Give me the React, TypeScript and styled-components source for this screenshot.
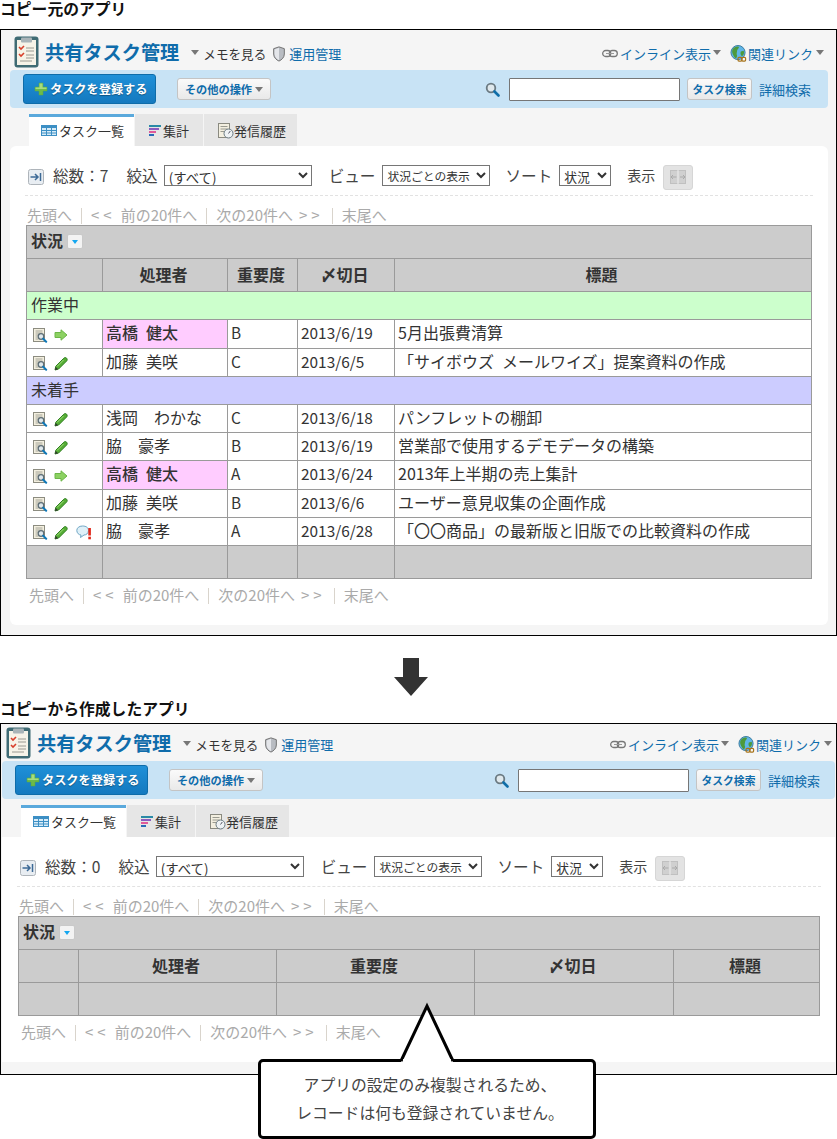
import React from "react";
import styled, { createGlobalStyle } from "styled-components";

const Global = createGlobalStyle`
  html, body { margin: 0; padding: 0; background: #fff; }
  body { font-family: "Noto Sans CJK JP", "Liberation Sans", sans-serif; color: #333; }
  * { box-sizing: border-box; }
`;

const Page = styled.div`
  position: relative;
  width: 837px;
  height: 1139px;
  overflow: hidden;
`;
const Caption = styled.div<{ $h: number }>`
  height: ${(p) => p.$h}px;
  font-size: 15.8px;
  font-weight: 700;
  line-height: 17px;
  color: #111;
`;
const ArrowRow = styled.div`
  height: 64px;
  padding: 22px 0 0 394px;
  display: flex;
  align-items: flex-start;
`;
const Frame = styled.div<{ $pl: number; $pr: number; $h: number }>`
  width: 837px;
  height: ${(p) => p.$h}px;
  border: 1px solid #000;
  background: #f5f5f5;
  padding: 0 ${(p) => p.$pr}px 0 ${(p) => p.$pl}px;
`;
const Header = styled.div<{ $h: number; $pl: number; $pr: number }>`
  height: ${(p) => p.$h}px;
  display: flex;
  align-items: flex-end;
  justify-content: space-between;
  padding: 0 ${(p) => p.$pr}px 0 ${(p) => p.$pl}px;
`;
const HeaderSide = styled.div`
  height: 36px;
  display: flex;
  align-items: center;
  font-size: 13px;
  & > svg {
    margin-top: 3px;
  }
`;
const Logo = styled.svg`
  && {
    flex: none;
    margin: 0 6px 0 0;
  }
`;
const Title = styled.div`
  font-size: 19.2px;
  font-weight: 700;
  color: #0f6cab;
  line-height: 24px;
  margin-right: 12px;
`;
const Plain = styled.span`
  color: #333;
  font-size: 12.6px;
  margin-top: 2px;
`;
const Link = styled.span`
  color: #0f6cab;
  margin-top: 2px;
`;
const Tri = styled.span<{ $l?: number; $r?: number }>`
  display: inline-block;
  width: 0;
  height: 0;
  border-style: solid;
  border-width: 5px 4.5px 0 4.5px;
  border-color: #777 transparent transparent transparent;
  margin: 1px ${(p) => p.$r ?? 0}px 0 ${(p) => p.$l ?? 0}px;
`;
const Spacer = styled.span<{ $w: number }>`
  display: inline-block;
  flex: none;
  width: ${(p) => p.$w}px;
`;
const Bar = styled.div<{ $pr: number }>`
  height: 38px;
  background: #c8e3f5;
  border-radius: 4px;
  display: flex;
  align-items: center;
  justify-content: space-between;
  padding: 0 ${(p) => p.$pr}px 0 13px;
`;
const BarSide = styled.div`
  display: flex;
  align-items: center;
`;
const PrimaryButton = styled.div`
  width: 133px;
  height: 30px;
  border: 1px solid #0e6ca9;
  border-radius: 3px;
  background: linear-gradient(#1f90d8, #1479bf);
  color: #fff;
  font-size: 12.2px;
  font-weight: 700;
  display: flex;
  align-items: center;
  padding-left: 10px;
  gap: 2px;
  text-shadow: 0 1px 1px rgba(0, 0, 0, 0.35);
  white-space: nowrap;
`;
const GreyButton = styled.div<{ $w: number; $fs: number; $ml: number }>`
  width: ${(p) => p.$w}px;
  height: 22px;
  margin-left: ${(p) => p.$ml}px;
  border: 1px solid #c4c4c4;
  border-radius: 3px;
  background: linear-gradient(#fafafa, #e9e9e9);
  color: #0f6cab;
  font-size: ${(p) => p.$fs}px;
  font-weight: 700;
  display: flex;
  align-items: center;
  justify-content: center;
  gap: 3px;
  white-space: nowrap;
`;
const SearchInput = styled.input`
  width: 171px;
  height: 23px;
  margin: 0 0 0 9px;
  border: 1px solid #767676;
  border-radius: 1px;
  background: #fff;
  padding: 0;
`;
const BarLink = styled.span`
  color: #0f6cab;
  font-size: 13px;
  margin-left: 7px;
`;
const Tabs = styled.div<{ $ml: number }>`
  height: 32px;
  margin: 6px 0 0 ${(p) => p.$ml}px;
  display: flex;
  gap: 1px;
`;
const Tab = styled.div<{ $w: number; $on?: boolean; $pl: number; $gap: number }>`
  width: ${(p) => p.$w}px;
  height: 32px;
  background: ${(p) => (p.$on ? "#fff" : "#e6e6e6")};
  border-top: 3px solid ${(p) => (p.$on ? "#5aa9dc" : "#e6e6e6")};
  display: flex;
  align-items: center;
  padding: 0 0 2px ${(p) => p.$pl}px;
  gap: ${(p) => p.$gap}px;
  font-size: 13px;
  color: #333;
  white-space: nowrap;
`;
const Panel = styled.div<{ $h: number; $pl: number; $pr: number; $round?: boolean }>`
  height: ${(p) => p.$h}px;
  background: #fff;
  border-radius: ${(p) => (p.$round ? "6px" : "0")};
  padding: 19px ${(p) => p.$pr}px 0 ${(p) => p.$pl}px;
`;
const Toolbar = styled.div`
  height: 31px;
  padding: 0 0 6px 3px;
  border-bottom: 1px dashed #e2e2e2;
  margin-left: -1px;
  margin-right: -1px;
  display: flex;
  align-items: center;
  font-size: 15.6px;
  white-space: nowrap;
`;
const Label = styled.span<{ $ml?: number; $fs?: number }>`
  margin: -4px 0 0 ${(p) => p.$ml ?? 0}px;
  font-size: ${(p) => p.$fs ?? 15.6}px;
  color: #444;
`;
const NativeSelect = styled.select<{ $w: number; $ml: number; $fs: number }>`
  width: ${(p) => p.$w}px;
  height: 21px;
  margin: -3px 0 0 ${(p) => p.$ml}px;
  font-family: inherit;
  font-size: ${(p) => p.$fs}px;
  color: #333;
  background: #fff;
  border: 1px solid #767676;
  border-radius: 0;
  padding: 0;
`;
const ColumnToggle = styled.div`
  width: 30px;
  height: 25px;
  margin: 0 0 0 8px;
  background: #e3e3e3;
  border: 1px solid #d6d6d6;
  border-radius: 3px;
  display: flex;
  align-items: center;
  justify-content: center;
`;
const Pager = styled.div<{ $pt: number; $ml: number; $h: number }>`
  height: ${(p) => p.$h}px;
  padding: ${(p) => p.$pt}px 0 0 ${(p) => p.$ml}px;
  font-size: 15px;
  line-height: 20px;
  color: #aaa;
  display: flex;
  white-space: nowrap;
`;
const Chevrons = styled.span`
  letter-spacing: 4px;
  margin-right: 5px;
`;
const ChevronsAfter = styled.span`
  letter-spacing: 4px;
  margin-left: 6px;
  margin-right: -1px;
`;
const Sep = styled.span`
  width: 1px;
  height: 16px;
  margin: 3px 9px 0 9px;
  background: #d9d4cc;
`;
const Grid = styled.table<{ $w: number }>`
  width: ${(p) => p.$w}px;
  table-layout: fixed;
  border-collapse: collapse;
  font-size: 16px;
  color: #333;
`;
const Row = styled.tr<{ $h: number; $bg?: string }>`
  height: ${(p) => p.$h}px;
  background: ${(p) => p.$bg ?? "#fff"};
`;
const Th = styled.th`
  border: 1px solid #9a9a9a;
  background: #ccc;
  padding: 0 3px 2px 0;
  text-align: center;
  font-size: 16px;
  font-weight: 700;
  line-height: 20px;
`;
const StatusHead = styled.div`
  display: flex;
  align-items: center;
  padding: 0 0 2px 4px;
  gap: 4px;
`;
const Drop = styled.span`
  width: 16px;
  height: 15px;
  margin-top: 3px;
  background: #f3f3f3;
  border: 1px solid #c9c9c9;
  border-radius: 2px;
  display: flex;
  align-items: center;
  justify-content: center;
  &::after {
    content: "";
    border-style: solid;
    border-width: 4px 3.5px 0 3.5px;
    border-color: #14a7f0 transparent transparent transparent;
  }
`;
const Td = styled.td<{ $bg?: string; $bold?: boolean; $fs?: number; $pl?: number }>`
  border: 1px solid #9a9a9a;
  padding: 0 0 4px ${(p) => p.$pl ?? 3}px;
  line-height: 20px;
  background: ${(p) => p.$bg ?? "transparent"};
  font-size: ${(p) => p.$fs ?? 16}px;
  font-weight: ${(p) => (p.$bold ? 500 : 400)};
  white-space: nowrap;
  overflow: hidden;
`;
const IconCell = styled.div`
  display: flex;
  align-items: center;
  padding: 6px 0 0 3px;
  gap: 6px;
`;
const Filler = styled.td`
  border: 1px solid #9a9a9a;
  background: #ccc;
  padding: 0;
`;
const Callout = styled.div`
  position: absolute;
  left: 258px;
  top: 1059px;
  width: 338px;
  height: 80px;
  border: 3px solid #000;
  border-radius: 5px;
  background: #fff;
  font-size: 15.8px;
  line-height: 28px;
  text-align: center;
  color: #444;
  padding: 9px 0 0 6px;
`;
const Tail = styled.svg`
  position: absolute;
  left: 134px;
  top: -63px;
`;

const Icon = styled.svg`
  flex: none;
  display: block;
`;
const BubbleSvg = styled(Icon)`
  margin-left: 2px;
`;

const LogoIcon = () => (
  <Logo width="25" height="32" viewBox="0 0 25 32">
    <rect x="0.5" y="0.5" width="24" height="31" rx="3" fill="#3f6b74" />
    <rect x="3" y="4" width="19" height="25" fill="#f6f3e8" />
    <rect x="7" y="1.5" width="11" height="5" rx="1" fill="#a9b4b8" />
    <path d="M5 11l2 2 3-3M5 18l2 2 3-3" fill="none" stroke="#d8402c" strokeWidth="1.6" />
    <path d="M12 12h8M12 15h8M12 19h8M12 22h8M6 25h12" stroke="#9a9a92" strokeWidth="1" />
  </Logo>
);
const ShieldIcon = () => (
  <Icon width="14" height="16" viewBox="0 0 14 18">
    <path d="M7 1l6 2v6c0 4-3 6.500-6 8-3-1.500-6-4-6-8V3z" fill="#b8bcc2" stroke="#666" />
    <path d="M7 2v14c-2.500-1.300-5-3.500-5-7V4z" fill="#e4e6ea" />
  </Icon>
);
const ChainIcon = () => (
  <Icon width="16" height="9" viewBox="0 0 16 9">
    <rect x="0.700" y="1.500" width="8" height="6" rx="3" fill="none" stroke="#777" strokeWidth="1.300" />
    <rect x="7.300" y="1.500" width="8" height="6" rx="3" fill="none" stroke="#777" strokeWidth="1.300" />
    <path d="M4 4.500h8" stroke="#999" />
  </Icon>
);
const GlobeIcon = () => (
  <Icon width="17" height="17" viewBox="0 0 17 18">
    <circle cx="8" cy="8" r="7.500" fill="#5fb5e8" stroke="#3b7a9c" />
    <path d="M2 5c2-3 5-4 7-3 0 2-2 2-2 4s-1 3 0 5c0 2-1 3-2 3C3 11 1 8 2 5zM11 7l3-1c1 2 0 5-2 6-1-1-2-3-1-5z" fill="#4d9a3c" />
    <rect x="8" y="13" width="4" height="4" rx="1" fill="none" stroke="#a8741c" strokeWidth="1.300" />
    <rect x="12" y="13" width="4" height="4" rx="1" fill="none" stroke="#a8741c" strokeWidth="1.300" />
  </Icon>
);
const PlusIcon = () => (
  <Icon width="14" height="14" viewBox="0 0 14 14">
    <path d="M5 1h4v4h4v4H9v4H5V9H1V5h4z" fill="#6cbb4a" stroke="#5aa83c" strokeWidth="0.500" />
    <path d="M5.500 1.500h3v4h-3zM1.500 5.500h11v1.500h-11z" fill="#a6dc7e" />
  </Icon>
);
const Magnifier = () => (
  <Icon width="15" height="15" viewBox="0 0 15 15">
    <circle cx="6" cy="6" r="4.300" fill="#dfe8ec" stroke="#6b7a82" strokeWidth="1.800" />
    <path d="M9.500 9.500l4 4" stroke="#0f6ea8" strokeWidth="2.600" strokeLinecap="round" />
  </Icon>
);
const TableIcon = () => (
  <Icon width="16" height="11" viewBox="0 0 16 11">
    <rect x="0.500" y="0.500" width="15" height="10" fill="#d8ecf8" stroke="#3c8fc4" />
    <rect x="0" y="0" width="16" height="3" fill="#3c8fc4" />
    <path d="M5.500 0v11M10.500 0v11M0 5.500h16M0 8h16" stroke="#3c8fc4" />
  </Icon>
);
const SumIcon = () => (
  <Icon width="12" height="11" viewBox="0 0 12 11">
    <rect x="0" y="0" width="12" height="2" fill="#2a8aa6" />
    <rect x="0" y="3" width="10" height="2" fill="#8a5cc0" />
    <rect x="0" y="6" width="7" height="2" fill="#e05a9a" />
    <rect x="0" y="9" width="5" height="2" fill="#2a6ab8" />
  </Icon>
);
const HistoryIcon = () => (
  <Icon width="16" height="16" viewBox="0 0 16 16">
    <rect x="0.500" y="0.500" width="11" height="14" fill="#f3efe0" stroke="#8a8a80" />
    <path d="M2.500 3.500h7M2.500 6h7M2.500 8.500h4" stroke="#9a9a90" />
    <circle cx="10.500" cy="10.500" r="4.500" fill="#eef2f4" stroke="#6b7a82" />
    <path d="M10.500 10.500l1.800-2.500" stroke="#556" />
  </Icon>
);
const ExportIcon = () => (
  <Icon width="16" height="16" viewBox="0 0 16 16">
    <rect x="0.500" y="0.500" width="15" height="15" rx="2" fill="#e8edf2" stroke="#aeb4ba" />
    <path d="M2.500 8h7M7 5l3 3-3 3" fill="none" stroke="#3d6a96" strokeWidth="1.500" />
    <path d="M12.500 4v8" stroke="#3d6a96" strokeWidth="1.500" />
  </Icon>
);
const ColumnsIcon = () => (
  <Icon width="16" height="14" viewBox="0 0 16 14">
    <rect x="0.500" y="0.500" width="15" height="13" fill="#d0d0d0" stroke="#c0c0c0" />
    <path d="M8 0v14" stroke="#eee" />
    <path d="M1.500 7h5M10 7h5" stroke="#aaa" />
    <path d="M3 5l-2 2 2 2M13 5l2 2-2 2" fill="none" stroke="#aaa" />
  </Icon>
);
const DetailIcon = () => (
  <Icon width="15" height="15" viewBox="0 0 15 15">
    <rect x="0.500" y="0.500" width="11" height="13" fill="#f3efdf" stroke="#8c8c80" />
    <path d="M2.500 3h7M2.500 5h7M2.500 7h3M2.500 9h2M2.500 11h3" stroke="#a4a498" />
    <circle cx="8" cy="8.500" r="2.800" fill="#dfe8ec" stroke="#5e6e76" strokeWidth="1.300" />
    <path d="M10.200 10.700l3 3" stroke="#0f78b8" strokeWidth="2" strokeLinecap="round" />
  </Icon>
);
const ArrowIcon = () => (
  <Icon width="14" height="12" viewBox="0 0 14 12">
    <path d="M1 3.500h6V.8L13 6l-6 5.200V8.500H1z" fill="#8cd162" stroke="#6cb648" />
  </Icon>
);
const PencilIcon = () => (
  <Icon width="14" height="14" viewBox="0 0 14 14">
    <path d="M1 13l.8-3.800L9.800 1.200c.8-.8 2-.8 2.800 0s.8 2 0 2.800l-8 8z" fill="#55ad35" stroke="#2f7f20" />
    <path d="M3 9.500l6.500-6.500" stroke="#a6e080" />
    <path d="M1 13l.8-3 2.200 2.200z" fill="#333" />
  </Icon>
);
const BubbleIcon = () => (
  <BubbleSvg width="16" height="15" viewBox="0 0 16 15">
    <path d="M6.500 1C3 1 .8 3 .8 5.500S3 10 5 10l-.5 2.500L8 10c2 0 4.500-1.500 4.500-4.500S10 1 6.500 1z" fill="#dff0f8" stroke="#6fa6c4" />
    <rect x="12.300" y="3" width="2.600" height="7.500" fill="#e02a1c" />
    <rect x="12.300" y="11.700" width="2.600" height="2.600" fill="#e02a1c" />
  </BubbleSvg>
);
const DownArrow = () => (
  <Icon width="34" height="38" viewBox="0 0 34 38">
    <path d="M9 0h16v19h9L17 38 0 19h9z" fill="#333" />
  </Icon>
);

const PINK = "#ffccff";
type TaskRow = { kind: "view" | "edit"; bubble?: boolean; name: string; hot?: boolean; level: string; date: string; title: string; h: number };

const working: TaskRow[] = [
  { kind: "view", name: "高橋\u2002健太", hot: true, level: "B", date: "2013/6/19", title: "5月出張費清算", h: 29 },
  { kind: "edit", name: "加藤\u2002美咲", level: "C", date: "2013/6/5", title: "「サイボウズ\u2002メールワイズ」提案資料の作成", h: 28 },
];
const waiting: TaskRow[] = [
  { kind: "edit", name: "浅岡　わかな", level: "C", date: "2013/6/18", title: "パンフレットの棚卸", h: 28 },
  { kind: "edit", name: "脇　豪孝", level: "B", date: "2013/6/19", title: "営業部で使用するデモデータの構築", h: 28 },
  { kind: "view", name: "高橋\u2002健太", hot: true, level: "A", date: "2013/6/24", title: "2013年上半期の売上集計", h: 29 },
  { kind: "edit", name: "加藤\u2002美咲", level: "B", date: "2013/6/6", title: "ユーザー意見収集の企画作成", h: 28 },
  { kind: "edit", bubble: true, name: "脇　豪孝", level: "A", date: "2013/6/28", title: "「〇〇商品」の最新版と旧版での比較資料の作成", h: 28 },
];

const TaskLine = ({ t }: { t: TaskRow }) => (
  <Row $h={t.h}>
    <Td>
      <IconCell>
        <DetailIcon />
        {t.kind === "view" ? <ArrowIcon /> : <PencilIcon />}
        {t.bubble && <BubbleIcon />}
      </IconCell>
    </Td>
    <Td $bg={t.hot ? PINK : undefined} $bold={t.hot}>{t.name}</Td>
    <Td $fs={15.4}>{t.level}</Td>
    <Td $fs={15.4}>{t.date}</Td>
    <Td>{t.title}</Td>
  </Row>
);

const PagerLinks = () => (
  <>
    <span>先頭へ</span>
    <Sep />
    <span><Chevrons>&lt;&lt;</Chevrons>前の20件へ</span>
    <Sep />
    <span>次の20件へ<ChevronsAfter>&gt;&gt;</ChevronsAfter></span>
    <Sep />
    <span>末尾へ</span>
  </>
);

type AppProps = {
  total: number;
  frameH: number;
  padL: number;
  padR: number;
  headerH: number;
  headerPadL: number;
  headerPadR: number;
  barPr: number;
  tabsMl: number;
  panelH: number;
  panelPl: number;
  panelPr: number;
  round?: boolean;
  pagerTopMl: number;
  pagerBottomMl: number;
  children: React.ReactNode;
};

const AppFrame = (p: AppProps) => (
  <Frame $pl={p.padL} $pr={p.padR} $h={p.frameH}>
    <Header $h={p.headerH} $pl={p.headerPadL} $pr={p.headerPadR}>
      <HeaderSide>
        <LogoIcon />
        <Title>共有タスク管理</Title>
        <Tri $r={4} />
        <Plain>メモを見る</Plain>
        <Spacer $w={6} />
        <ShieldIcon />
        <Spacer $w={3} />
        <Link>運用管理</Link>
      </HeaderSide>
      <HeaderSide>
        <ChainIcon />
        <Spacer $w={2} />
        <Link>インライン表示</Link>
        <Tri $l={2} />
        <Spacer $w={9} />
        <GlobeIcon />
        <Spacer $w={1} />
        <Link>関連リンク</Link>
        <Tri $l={3} />
      </HeaderSide>
    </Header>
    <Bar $pr={p.barPr}>
      <BarSide>
        <PrimaryButton>
          <PlusIcon />
          タスクを登録する
        </PrimaryButton>
        <GreyButton $w={94} $fs={11.2} $ml={21}>
          その他の操作
          <Tri />
        </GreyButton>
      </BarSide>
      <BarSide>
        <Magnifier />
        <SearchInput />
        <GreyButton $w={65} $fs={10.8} $ml={7}>タスク検索</GreyButton>
        <BarLink>詳細検索</BarLink>
      </BarSide>
    </Bar>
    <Tabs $ml={p.tabsMl}>
      <Tab $w={105} $on $pl={12} $gap={2}><TableIcon />タスク一覧</Tab>
      <Tab $w={68} $pl={14} $gap={2}><SumIcon />集計</Tab>
      <Tab $w={93} $pl={14} $gap={0}><HistoryIcon />発信履歴</Tab>
    </Tabs>
    <Panel $h={p.panelH} $pl={p.panelPl} $pr={p.panelPr} $round={p.round}>
      <Toolbar>
        <ExportIcon />
        <Label $ml={9}>総数：{p.total}</Label>
        <Label $ml={18}>絞込</Label>
        <NativeSelect $w={148} $ml={6} $fs={13.4}><option>(すべて)</option></NativeSelect>
        <Label $ml={17}>ビュー</Label>
        <NativeSelect $w={108} $ml={7} $fs={11.8}><option>状況ごとの表示</option></NativeSelect>
        <Label $ml={15}>ソート</Label>
        <NativeSelect $w={52} $ml={7} $fs={12.8}><option>状況</option></NativeSelect>
        <Label $ml={16} $fs={14}>表示</Label>
        <ColumnToggle><ColumnsIcon /></ColumnToggle>
      </Toolbar>
      <Pager $h={29} $pt={9} $ml={p.pagerTopMl}><PagerLinks /></Pager>
      {p.children}
      <Pager $h={31} $pt={6} $ml={p.pagerBottomMl}><PagerLinks /></Pager>
    </Panel>
  </Frame>
);

export default function App() {
  return (
    <Page>
      <Global />
      <Caption $h={29}>コピー元のアプリ</Caption>
      <AppFrame
        total={7}
        frameH={607}
        padL={9}
        padR={8}
        headerH={40}
        headerPadL={4}
        headerPadR={4}
        barPr={17}
        tabsMl={19}
        panelH={479}
        panelPl={16}
        panelPr={16}
        round
        pagerTopMl={1}
        pagerBottomMl={3}
      >
        <Grid $w={786}>
          <colgroup>
            <col style={{ width: 76 }} />
            <col style={{ width: 125 }} />
            <col style={{ width: 70 }} />
            <col style={{ width: 97 }} />
            <col />
          </colgroup>
          <tbody>
            <Row $h={33}>
              <Th colSpan={5}><StatusHead>状況<Drop /></StatusHead></Th>
            </Row>
            <Row $h={33}>
              <Th />
              <Th>処理者</Th>
              <Th>重要度</Th>
              <Th>〆切日</Th>
              <Th>標題</Th>
            </Row>
            <Row $h={28} $bg="#ccffcc"><Td colSpan={5} $pl={4}>作業中</Td></Row>
            {working.map((t) => <TaskLine key={t.title} t={t} />)}
            <Row $h={28} $bg="#ccccff"><Td colSpan={5} $pl={4}>未着手</Td></Row>
            {waiting.map((t) => <TaskLine key={t.title} t={t} />)}
            <Row $h={33}>
              <Filler /><Filler /><Filler /><Filler /><Filler />
            </Row>
          </tbody>
        </Grid>
      </AppFrame>
      <ArrowRow><DownArrow /></ArrowRow>
      <Caption $h={23}>コピーから作成したアプリ</Caption>
      <AppFrame
        total={0}
        frameH={352}
        padL={1}
        padR={1}
        headerH={37}
        headerPadL={4}
        headerPadR={3}
        barPr={15}
        tabsMl={19}
        panelH={225}
        panelPl={16}
        panelPr={15}
        pagerTopMl={1}
        pagerBottomMl={3}
      >
        <Grid $w={802}>
          <colgroup>
            <col style={{ width: 60 }} />
            <col style={{ width: 198 }} />
            <col style={{ width: 198 }} />
            <col style={{ width: 199 }} />
            <col />
          </colgroup>
          <tbody>
            <Row $h={33}>
              <Th colSpan={5}><StatusHead>状況<Drop /></StatusHead></Th>
            </Row>
            <Row $h={33}>
              <Th />
              <Th>処理者</Th>
              <Th>重要度</Th>
              <Th>〆切日</Th>
              <Th>標題</Th>
            </Row>
            <Row $h={33}>
              <Filler /><Filler /><Filler /><Filler /><Filler />
            </Row>
          </tbody>
        </Grid>
      </AppFrame>
      <Callout>
        <Tail width="64" height="64" viewBox="0 0 64 64">
          <path d="M6 63L32 4l26 59z" fill="#fff" />
          <path d="M6 62L32 7l26 55" fill="none" stroke="#000" strokeWidth="3" strokeLinejoin="miter" />
          <rect x="8" y="60" width="48" height="4" fill="#fff" />
        </Tail>
        アプリの設定のみ複製されるため、
        <br />
        レコードは何も登録されていません。
      </Callout>
    </Page>
  );
}
